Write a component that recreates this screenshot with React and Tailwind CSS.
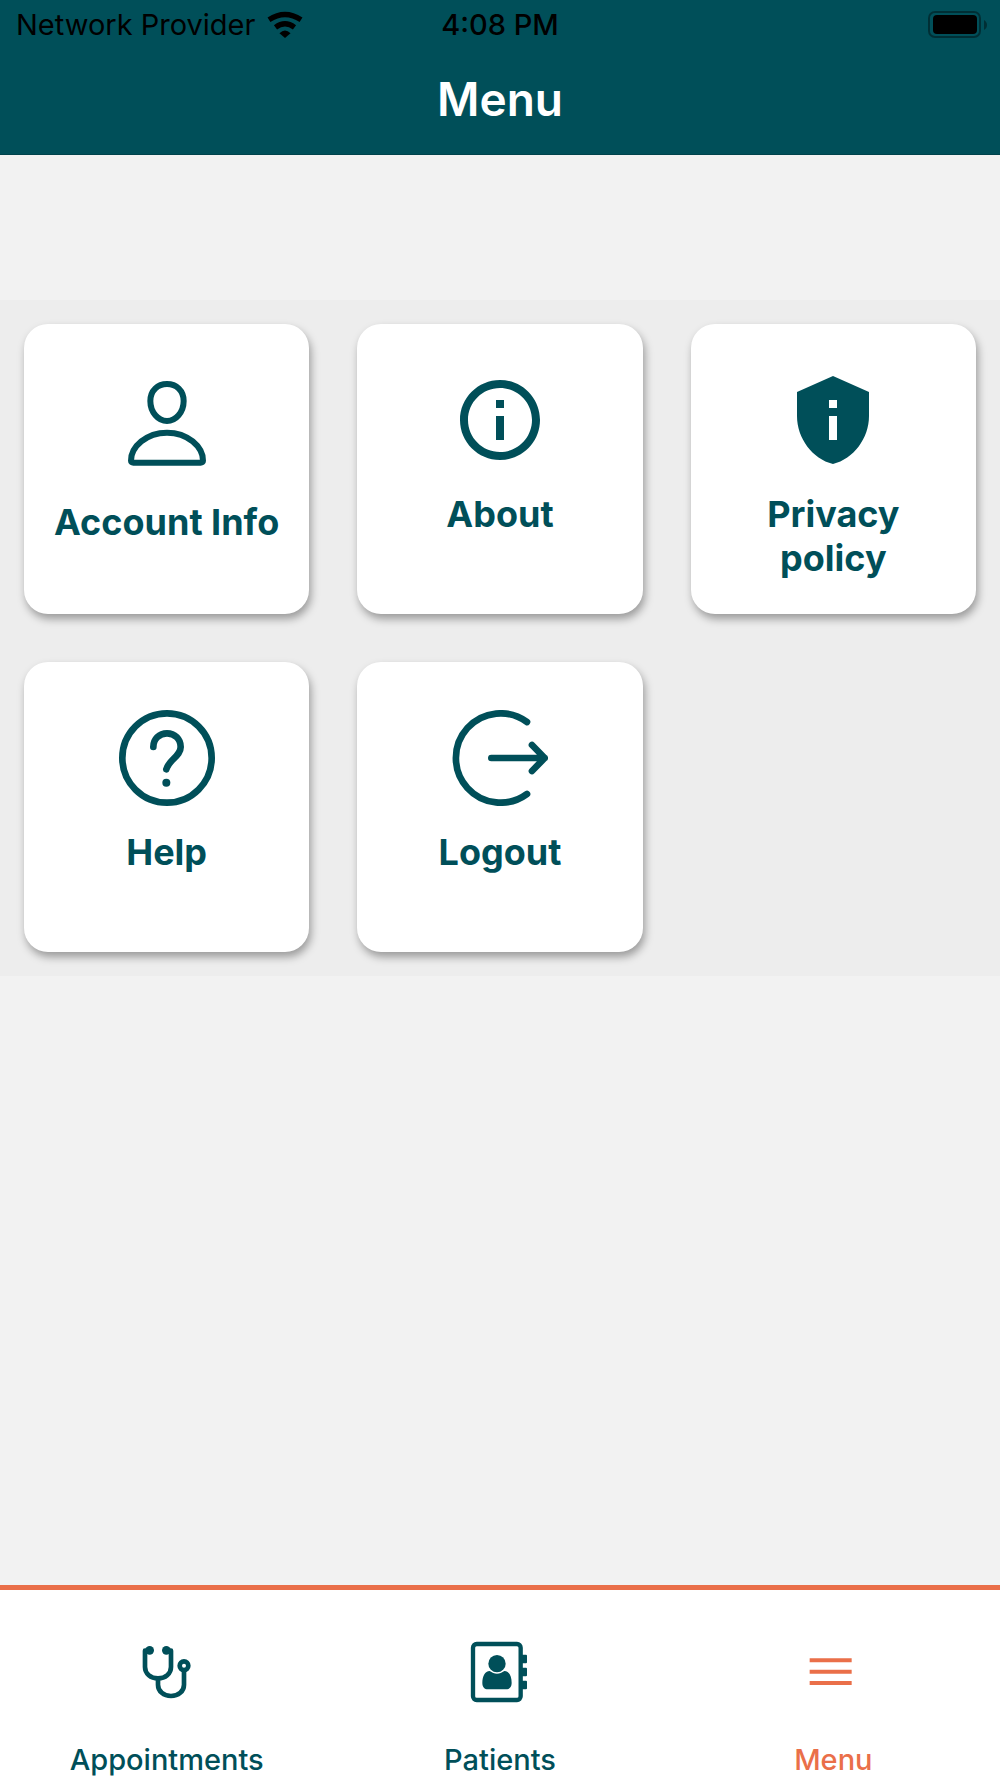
import { MdInfoOutline, MdPrivacyTip } from "react-icons/md";

const WifiIcon = ({ className }) => (
  <svg viewBox="0 0 110 80" className={className} aria-hidden="true">
    <g fill="none" stroke="currentColor" strokeWidth="16">
      <path d="M6 24Q55 -8 104 24" />
      <path d="M26 47Q55 25 84 47" />
    </g>
    <path d="M38 65Q55 48 72 65L55 80z" fill="currentColor" />
  </svg>
);

const BatteryIcon = ({ className }) => (
  <svg viewBox="0 0 60 28" className={className} aria-hidden="true">
    <rect
      x="1"
      y="1"
      width="51"
      height="25"
      rx="6"
      fill="none"
      stroke="currentColor"
      strokeWidth="2"
      opacity="0.4"
    />
    <rect x="5" y="4" width="44" height="19" rx="4" fill="currentColor" />
    <path d="M56 9c4 2 4 8 0 10z" fill="currentColor" opacity="0.4" />
  </svg>
);

const PersonIcon = ({ className }) => (
  <svg
    viewBox="0 0 312 312"
    className={className}
    fill="none"
    stroke="currentColor"
    strokeWidth="18"
    strokeLinejoin="round"
    aria-hidden="true"
  >
    <path d="M156 36c28 0 50 20 50 51 0 34-24 60-50 60s-50-26-50-60c0-31 22-51 50-51z" />
    <path d="M156 182c-62 0-108 42-108 84 0 4 3 6 7 6h202c4 0 7-2 7-6 0-42-46-84-108-84z" />
  </svg>
);

const HelpIcon = ({ className }) => (
  <svg
    viewBox="0 0 288 288"
    className={className}
    fill="none"
    stroke="currentColor"
    strokeWidth="20"
    strokeLinecap="round"
    aria-hidden="true"
  >
    <circle cx="144" cy="144" r="134" />
    <path d="M103 111c0-24 18-41 41-41s41 17 41 41c0 28-36 38-43 67" />
    <circle cx="142" cy="218" r="12" fill="currentColor" stroke="none" />
  </svg>
);

const LogoutIcon = ({ className }) => (
  <svg
    viewBox="0 0 288 288"
    className={className}
    fill="none"
    stroke="currentColor"
    strokeWidth="20"
    strokeLinecap="round"
    strokeLinejoin="round"
    aria-hidden="true"
  >
    <path d="M225 36A134 134 0 1 0 225 252" />
    <path d="M118 144H278M240 105l38 39-38 39" />
  </svg>
);

const StethoscopeIcon = ({ className }) => (
  <svg
    viewBox="0 0 192 192"
    className={className}
    fill="none"
    stroke="currentColor"
    strokeWidth="14"
    strokeLinejoin="round"
    aria-hidden="true"
  >
    <path d="M44 32H30V81c0 20 17 34 39 34s39-14 39-34V32H94" />
    <path d="M69 115v19c0 20 17 34 39 34s39-14 39-34V90" />
    <circle cx="147" cy="77" r="13" />
    <g fill="currentColor" stroke="none">
      <circle cx="44" cy="31" r="13" />
      <circle cx="94" cy="31" r="13" />
    </g>
  </svg>
);

const ContactsIcon = ({ className }) => (
  <svg
    viewBox="0 0 192 192"
    className={className}
    fill="currentColor"
    aria-hidden="true"
  >
    <rect
      x="15"
      y="12"
      width="143"
      height="168"
      rx="11"
      fill="none"
      stroke="currentColor"
      strokeWidth="13"
    />
    <path d="M160 44h14a3 3 0 0 1 3 3v20a3 3 0 0 1-3 3h-14zM160 83h14a3 3 0 0 1 3 3v20a3 3 0 0 1-3 3h-14zM160 122h14a3 3 0 0 1 3 3v20a3 3 0 0 1-3 3h-14z" />
    <circle cx="87" cy="71" r="26" />
    <path d="M65 93c-14 0-22 16-22 36 0 12 7 19 16 19h56c9 0 16-7 16-19 0-20-8-36-22-36-7 5-14 8-22 8s-15-3-22-8z" />
  </svg>
);

const BarsIcon = ({ className }) => (
  <svg
    viewBox="0 0 192 192"
    className={className}
    fill="currentColor"
    aria-hidden="true"
  >
    <path d="M26 55h126v12H26zM26 89h126v12H26zM26 123h126v12H26z" />
  </svg>
);

const menuItems = [
  { label: "Account Info", Icon: PersonIcon, size: "size-26" },
  { label: "About", Icon: MdInfoOutline, size: "size-24" },
  { label: "Privacy policy", Icon: MdPrivacyTip, size: "size-24" },
  { label: "Help", Icon: HelpIcon, size: "size-24" },
  { label: "Logout", Icon: LogoutIcon, size: "size-24" },
];

const tabs = [
  { label: "Appointments", Icon: StethoscopeIcon },
  { label: "Patients", Icon: ContactsIcon },
  { label: "Menu", Icon: BarsIcon, active: true },
];

function StatusBar() {
  return (
    <div className="grid grid-cols-3 items-center px-4 pt-[7px] text-[29px] leading-9 text-black">
      <div className="flex items-center gap-3 whitespace-nowrap">
        <span>Network Provider</span>
        <WifiIcon className="w-9 h-7 shrink-0" />
      </div>
      <span className="font-medium text-center">4:08 PM</span>
      <BatteryIcon className="h-7 w-15 -mr-1 justify-self-end" />
    </div>
  );
}

function MenuCard({ label, Icon, size }) {
  return (
    <button className="flex flex-col items-center gap-6 px-6 pt-12 pb-7 min-h-[290px] bg-white rounded-3xl shadow-[2px_5px_8px_rgba(0,0,0,0.35)] cursor-pointer">
      <Icon className={`${size} shrink-0`} />
      <span className="text-4xl font-bold leading-11">{label}</span>
    </button>
  );
}

export default function App() {
  return (
    <div className="flex flex-col min-h-screen bg-[#f2f2f2] text-[#004f59] font-['Inter',sans-serif]">
      <header className="bg-[#004f59] border-b border-[#00434c]">
        <StatusBar />
        <h1 className="pt-[27px] pb-[26px] text-[46px] font-semibold leading-[58px] text-center text-white">
          Menu
        </h1>
      </header>

      <main className="pt-[145px] grow">
        <div className="grid grid-cols-3 gap-12 p-6 bg-[#ededed]">
          {menuItems.map((item) => (
            <MenuCard key={item.label} {...item} />
          ))}
        </div>
      </main>

      <nav className="grid grid-cols-3 bg-white border-t-5 border-[#ea6f49]">
        {tabs.map(({ label, Icon, active }) => (
          <a
            key={label}
            href="#"
            aria-current={active ? "page" : undefined}
            className={`flex flex-col items-center gap-[38px] pt-[50px] text-[29px] font-medium leading-9 ${
              active ? "text-[#ea6f49]" : "text-[#004f59]"
            }`}
          >
            <Icon className="size-16" />
            {label}
          </a>
        ))}
      </nav>
    </div>
  );
}
